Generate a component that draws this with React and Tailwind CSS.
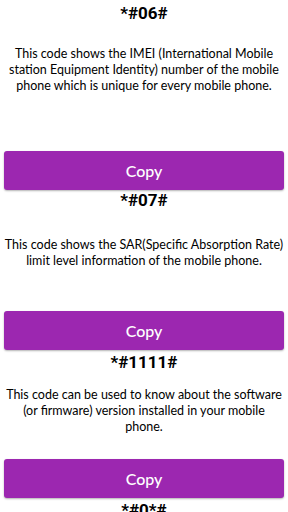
const items = [
  {
    code: "*#06#",
    lines: [
      "This code shows the IMEI (International Mobile",
      "station Equipment Identity) number of the mobile",
      "phone which is unique for every mobile phone.",
    ],
  },
  {
    code: "*#07#",
    lines: [
      "This code shows the SAR(Specific Absorption Rate)",
      "limit level information of the mobile phone.",
    ],
  },
  {
    code: "*#1111#",
    lines: [
      "This code can be used to know about the software",
      "(or firmware) version installed in your mobile",
      "phone.",
    ],
  },
];

const font = { fontFamily: "Lato, sans-serif" };
const codeFont = { fontFamily: "Roboto, sans-serif" };

const CopyButton = ({ className }) => (
  <button
    className={
      "block w-full h-[39px] rounded-[3px] bg-[#9c27b0] text-white text-[16px] font-medium shadow-[0_1px_2px_rgba(0,0,0,0.3)] " +
      className
    }
    style={font}
  >
    Copy
  </button>
);

const Desc = ({ lines, className }) => (
  <div className={"text-center text-[12.5px] leading-[16px] text-black " + className} style={font}>
    {lines.map((l) => (
      <p key={l} className="whitespace-nowrap">{l}</p>
    ))}
  </div>
);

export default function App() {
  const title = "text-center text-[17px] leading-[20px] font-bold text-black";
  return (
    <div className="w-[288px] h-[512px] overflow-hidden bg-white px-[4px] pt-[3px]">
      <p className={title} style={codeFont}>{items[0].code}</p>
      <Desc lines={items[0].lines} className="mt-[23px]" />
      <CopyButton className="mt-[57px]" />

      <p className={title} style={codeFont}>{items[1].code}</p>
      <Desc lines={items[1].lines} className="mt-[27px]" />
      <CopyButton className="mt-[42px]" />

      <p className={title + " mt-[2px]"} style={codeFont}>{items[2].code}</p>
      <Desc lines={items[2].lines} className="mt-[15px]" />
      <CopyButton className="mt-[24px]" />

      <p className={title + " mt-[2px]"} style={codeFont}>*#0*#</p>
    </div>
  );
}
